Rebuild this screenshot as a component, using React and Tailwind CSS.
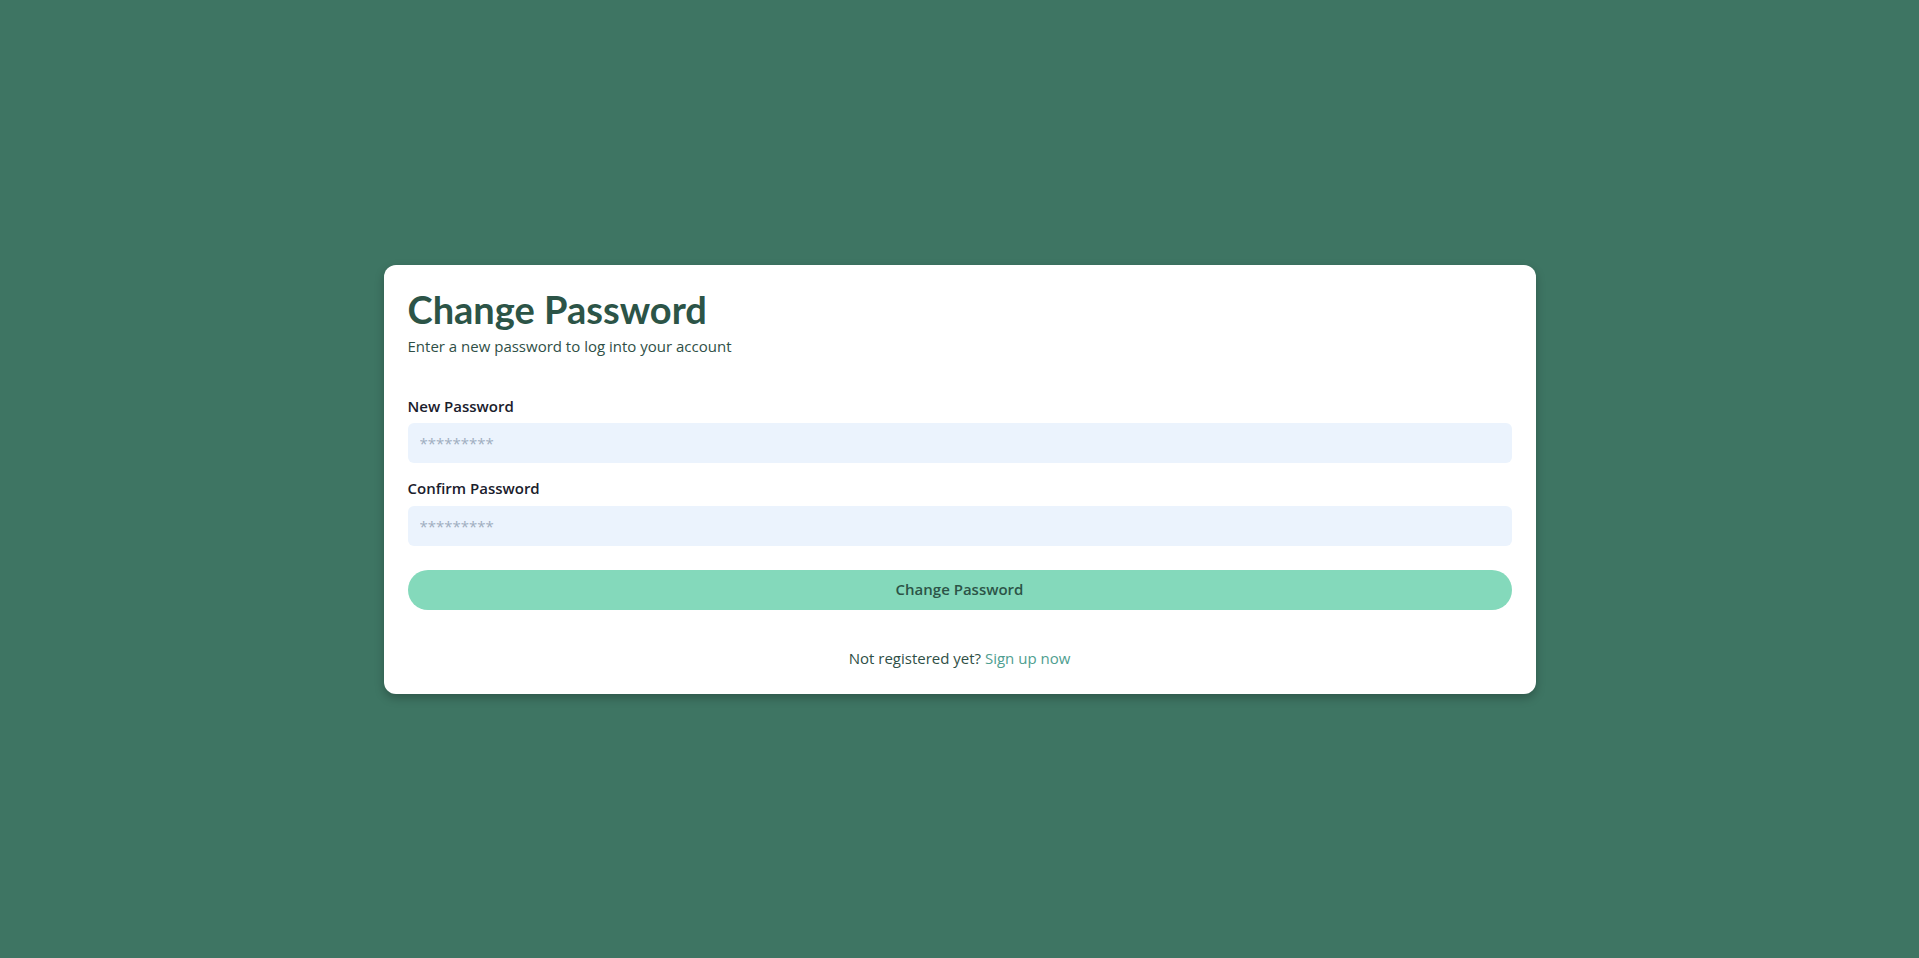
export default function App() {
  return (
    <div className="min-h-screen bg-[#3e7563] flex items-center justify-center font-['Open_Sans',sans-serif]">
      <div className="w-full max-w-6xl bg-white rounded-xl shadow-[0_4px_10px_rgba(0,0,0,0.25)] px-6 pt-6 pb-6">
        <h1 className="text-[38px] leading-10 font-bold text-[#2c5447] font-['Lato',sans-serif]">Change Password</h1>
        <p className="mt-[5px] text-[15px] leading-6 text-[#2f4f46]">Enter a new password to log into your account</p>

        <div className="mt-[36px]">
          <label className="block text-[15px] leading-6 font-semibold text-[#1a202c] mb-[5px]">New Password</label>
          <input
            type="password"
            placeholder="*********"
            className="w-full h-10 px-3 rounded-md bg-[#ebf3fd] text-[15px] placeholder:text-[#a0aec0] outline-none"
          />
        </div>

        <div className="mt-[13px]">
          <label className="block text-[15px] leading-6 font-semibold text-[#1a202c] mb-[6px]">Confirm Password</label>
          <input
            type="password"
            placeholder="*********"
            className="w-full h-10 px-3 rounded-md bg-[#ebf3fd] text-[15px] placeholder:text-[#a0aec0] outline-none"
          />
        </div>

        <button className="mt-6 w-full h-10 rounded-full bg-[#84d9bb] text-[#2c5447] text-[15px] font-semibold">
          Change Password
        </button>

        <p className="mt-[36px] text-center text-[15px] leading-6 text-[#2f4f46]">
          Not registered yet? <a href="#" className="text-[#4e9e90]">Sign up now</a>
        </p>
      </div>
    </div>
  );
}
